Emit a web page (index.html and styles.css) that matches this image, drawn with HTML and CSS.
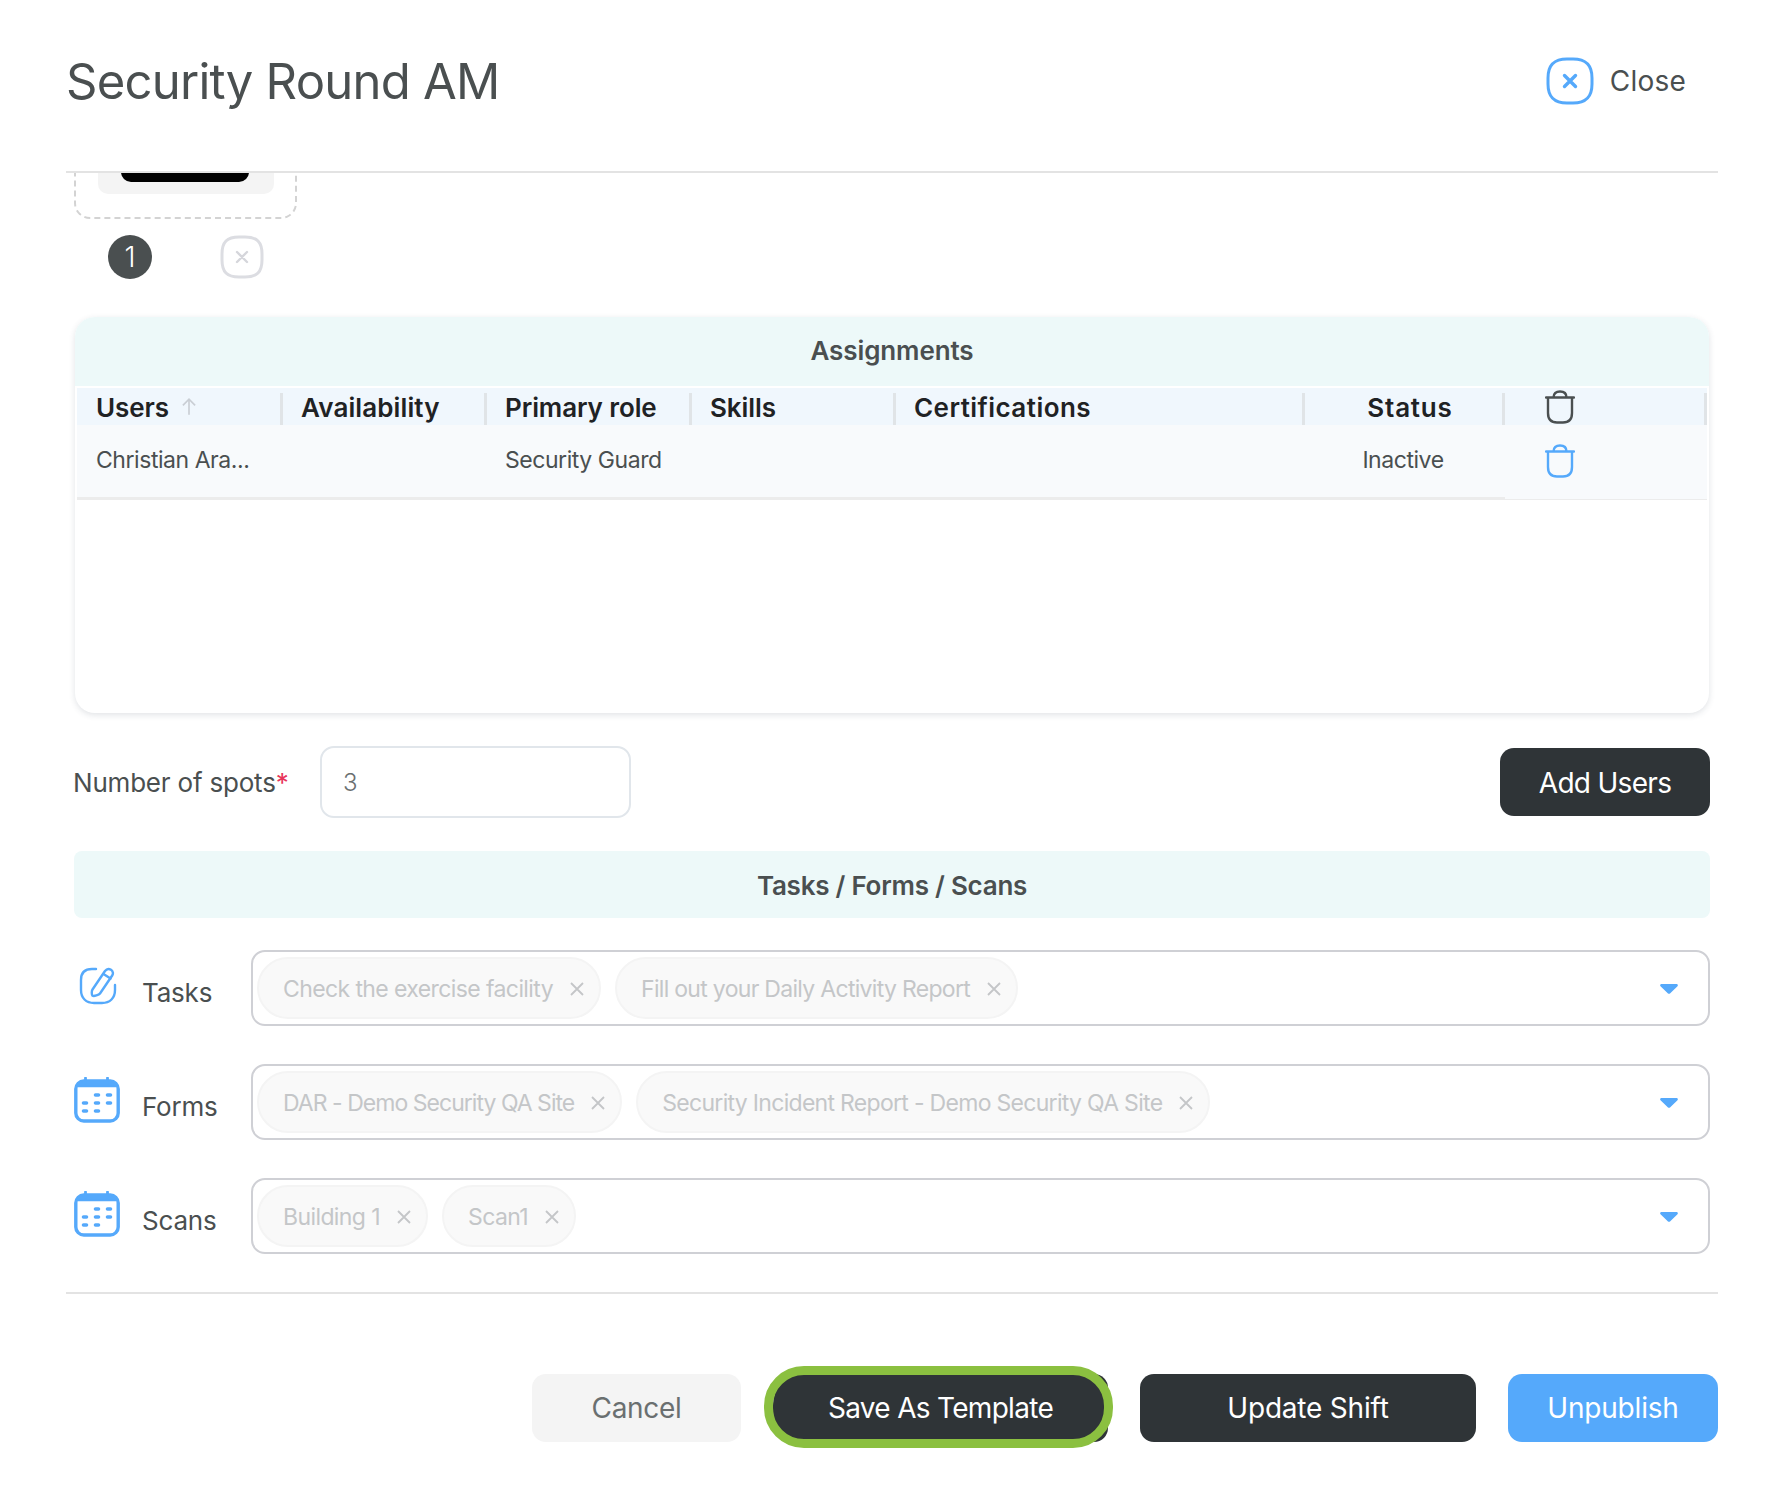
FILE: index.html
```html
<!DOCTYPE html>
<html lang="en">
<head>
<meta charset="utf-8">
<title>Security Round AM</title>
<link rel="stylesheet" href="styles.css">
</head>
<body>
<div class="modal">
  <header class="modal-head">
    <h1 class="title">Security Round AM</h1>
    <button class="close">
      <svg class="close-icon" viewBox="0 0 48 48" fill="none"><path d="M24 2h3C40 2 46 8 46 21v6c0 13-6 19-19 19h-6C8 46 2 40 2 27v-6C2 8 8 2 21 2Z" stroke="#55a9fb" stroke-width="3"/><path d="M18.500 18.500l11 11M29.500 18.500l-11 11" stroke="#55a9fb" stroke-width="3.400" stroke-linecap="round"/></svg>
      <span>Close</span>
    </button>
  </header>
  <main class="modal-body">
    <div class="thumb-block">
      <div class="thumb"><div class="thumb-grey"><div class="thumb-black"></div></div></div>
      <div class="thumb-actions">
        <span class="badge">1</span>
        <svg class="thumb-x" viewBox="0 0 44 44" fill="none"><path d="M22 2h3C37 2 42 7 42 19v6c0 12-5 17-17 17h-6C7 42 2 37 2 25v-6C2 7 7 2 19 2Z" stroke="#dcdde2" stroke-width="3"/><path d="M17 17l10 10M27 17L17 27" stroke="#d5d6db" stroke-width="2.400" stroke-linecap="round"/></svg>
      </div>
    </div>

    <section class="panel">
      <div class="band band-top">Assignments</div>
      <div class="table">
        <div class="tr th">
          <div class="cell c-users"><span>Users</span><svg class="sort" viewBox="0 0 16 18" fill="none"><path d="M8 16V2M2.500 7.500L8 2l5.500 5.500" stroke="#c9ced4" stroke-width="1.500"/></svg></div>
          <div class="cell c-avail">Availability</div>
          <div class="cell c-role">Primary role</div>
          <div class="cell c-skills">Skills</div>
          <div class="cell c-certs">Certifications</div>
          <div class="cell c-status">Status</div>
          <div class="cell c-del">
            <svg class="trash" viewBox="0 0 30 34" fill="none" stroke="#4a4f50" stroke-width="2.400" stroke-linecap="round"><path d="M1 7.500h28M8.500 7.500c0-4 2.500-6 6.500-6s6.500 2 6.500 6M3 7.500V23c0 6 3 9.500 9 9.500h6c6 0 9-3.500 9-9.500V7.500"/></svg>
          </div>
        </div>
        <div class="tr td">
          <div class="cell c-users">Christian Ara...</div>
          <div class="cell c-avail"></div>
          <div class="cell c-role">Security Guard</div>
          <div class="cell c-skills"></div>
          <div class="cell c-certs"></div>
          <div class="cell c-status">Inactive</div>
          <div class="cell c-del">
            <svg class="trash" viewBox="0 0 30 34" fill="none" stroke="#55a9fb" stroke-width="2.400" stroke-linecap="round"><path d="M1 7.500h28M8.500 7.500c0-4 2.500-6 6.500-6s6.500 2 6.500 6M3 7.500V23c0 6 3 9.500 9 9.500h6c6 0 9-3.500 9-9.500V7.500"/></svg>
          </div>
        </div>
      </div>
    </section>

    <div class="spots">
      <label class="spots-label">Number of spots<span class="req">*</span></label>
      <div class="spots-input">3</div>
      <button class="btn btn-dark btn-add">Add Users</button>
    </div>

    <div class="band band-tasks">Tasks / Forms / Scans</div>

    <div class="pick-list">
      <div class="pick">
        <div class="pick-icon">
          <svg class="icon-pencil" viewBox="0 0 40 40" fill="none" stroke="#55a9fb" stroke-width="2.400" stroke-linecap="round" stroke-linejoin="round"><path d="M17 3H13C6 3 2 7 2 14v10c0 8 5 13 13 13h8c8 0 13-5 13-13v-5"/><path d="M13.500 23.500L26 5c1.500-2 4-2.500 6-1.200s2.500 3.700 1.200 5.700L21 27.500c-1 1.500-6 3-7.500 2.200-1-.8-1-4.700 0-6.200Z"/><path d="M24.500 8l7 4.500"/></svg>
        </div>
        <span class="pick-label">Tasks</span>
        <div class="select">
          <span class="chip">Check the exercise facility<svg class="chip-x" viewBox="0 0 14 14"><path d="M1 1l12 12M13 1L1 13"/></svg></span>
          <span class="chip chip-mid">Fill out your Daily Activity Report<svg class="chip-x" viewBox="0 0 14 14"><path d="M1 1l12 12M13 1L1 13"/></svg></span>
          <svg class="caret" viewBox="0 0 18 10"><path d="M1.500 0h15c1.200 0 1.800 1.300 1 2.200L10 9.400c-.6.600-1.400.600-2 0L.500 2.200C-.300 1.300.300 0 1.500 0Z"/></svg>
        </div>
      </div>
      <div class="pick">
        <div class="pick-icon">
          <svg class="icon-cal" viewBox="0 0 46 46" fill="none"><rect x="1.800" y="4" width="42.400" height="40" rx="8" stroke="#55a9fb" stroke-width="3.400"/><path d="M3 9.500c1-3.500 3-4.500 6-4.500h28c3 0 5 1 6 4.500Z" fill="#55a9fb" stroke="#55a9fb" stroke-width="1.500"/><path d="M11.500 1v5M33.500 1v5" stroke="#55a9fb" stroke-width="2.800" stroke-linecap="round"/><path d="M21.500 18h3M33.500 18h3M9.500 26h3M21.500 26h3M33.500 26h3M9.500 34h3M21.500 34h3" stroke="#55a9fb" stroke-width="3.600" stroke-linecap="round"/></svg>
        </div>
        <span class="pick-label">Forms</span>
        <div class="select">
          <span class="chip chip-tight">DAR - Demo Security QA Site<svg class="chip-x" viewBox="0 0 14 14"><path d="M1 1l12 12M13 1L1 13"/></svg></span>
          <span class="chip chip-mid">Security Incident Report - Demo Security QA Site<svg class="chip-x" viewBox="0 0 14 14"><path d="M1 1l12 12M13 1L1 13"/></svg></span>
          <svg class="caret" viewBox="0 0 18 10"><path d="M1.500 0h15c1.200 0 1.800 1.300 1 2.200L10 9.400c-.6.600-1.400.600-2 0L.500 2.200C-.300 1.300.300 0 1.500 0Z"/></svg>
        </div>
      </div>
      <div class="pick">
        <div class="pick-icon">
          <svg class="icon-cal" viewBox="0 0 46 46" fill="none"><rect x="1.800" y="4" width="42.400" height="40" rx="8" stroke="#55a9fb" stroke-width="3.400"/><path d="M3 9.500c1-3.500 3-4.500 6-4.500h28c3 0 5 1 6 4.500Z" fill="#55a9fb" stroke="#55a9fb" stroke-width="1.500"/><path d="M11.500 1v5M33.500 1v5" stroke="#55a9fb" stroke-width="2.800" stroke-linecap="round"/><path d="M21.500 18h3M33.500 18h3M9.500 26h3M21.500 26h3M33.500 26h3M9.500 34h3M21.500 34h3" stroke="#55a9fb" stroke-width="3.600" stroke-linecap="round"/></svg>
        </div>
        <span class="pick-label">Scans</span>
        <div class="select">
          <span class="chip">Building 1<svg class="chip-x" viewBox="0 0 14 14"><path d="M1 1l12 12M13 1L1 13"/></svg></span>
          <span class="chip">Scan1<svg class="chip-x" viewBox="0 0 14 14"><path d="M1 1l12 12M13 1L1 13"/></svg></span>
          <svg class="caret" viewBox="0 0 18 10"><path d="M1.500 0h15c1.200 0 1.800 1.300 1 2.200L10 9.400c-.6.600-1.400.600-2 0L.500 2.200C-.300 1.300.300 0 1.500 0Z"/></svg>
        </div>
      </div>
    </div>
  </main>
  <footer class="modal-foot">
    <button class="btn btn-cancel">Cancel</button>
    <button class="btn btn-dark btn-save">Save As Template</button>
    <button class="btn btn-dark btn-update">Update Shift</button>
    <button class="btn btn-blue btn-unpublish">Unpublish</button>
  </footer>
</div>
</body>
</html>
```
FILE: styles.css
```css
* { box-sizing: border-box; }
html, body { margin: 0; height: 100%; background: #fff; }
body { font-family: Inter, "Liberation Sans", sans-serif; color: #4a4f50; }
button { font: inherit; border: 0; background: none; padding: 0; margin: 0; }

.modal { width: 1776px; height: 1496px; padding: 0 58px 0 66px; display: flex; flex-direction: column; overflow: hidden; }

.modal-head { height: 173px; flex: none; display: flex; align-items: center; justify-content: space-between; border-bottom: 2px solid #e3e3e3; padding: 0 32px 9px 0; }
.title { margin: 0; font-size: 49px; font-weight: 400; letter-spacing: -.75px; color: #4a4f50; }
.close { display: flex; align-items: center; gap: 16px; font-size: 28px; color: #4a4f50; letter-spacing: .2px; }
.close-icon { width: 48px; height: 48px; display: block; }

.modal-body { height: 1121px; flex: none; padding: 0 9px; overflow: hidden; border-bottom: 2px solid #e3e3e3; }

.thumb-block { height: 164px; }
.thumb { width: 223px; height: 66px; margin: -20px 0 0 -1px; border: 2px dashed #d3d3d3; border-radius: 16px; padding: 0 0 0 22px; }
.thumb-grey { width: 176px; height: 39px; background: #f4f4f4; border-radius: 0 0 10px 10px; padding-left: 23px; }
.thumb-black { width: 128px; height: 27px; background: #000; border-radius: 0 0 10px 10px; }
.thumb-actions { display: flex; align-items: center; gap: 68px; padding-left: 33px; margin-top: 16px; }
.badge { width: 44px; height: 44px; border-radius: 50%; background: #4a4f50; color: #fff; display: flex; align-items: center; justify-content: center; font-size: 28px; font-weight: 300; }
.thumb-x { width: 44px; height: 44px; display: block; }

.panel { height: 396px; border-radius: 20px; background: #fff; box-shadow: 0 2px 6px rgba(40, 60, 80, .14); overflow: hidden; }
.band { background: #edf9f9; display: flex; align-items: center; justify-content: center; font-size: 26px; font-weight: 600; color: #4a4f50; letter-spacing: -.1px; }
.band-top { height: 69px; padding-bottom: 2px; }

.table { padding: 2px 2px 0; }
.tr { display: grid; grid-template-columns: 206px 204px 205px 204px 409px 200px 1fr; }
.th { height: 37px; background: #f0f7fd; font-size: 26px; font-weight: 600; color: #1f2224; }
.td { height: 75px; background: #f8fafc; font-size: 23px; color: #4a4f50; letter-spacing: -.45px; }
.cell { display: flex; align-items: center; padding-left: 18px; white-space: nowrap; position: relative; }
.th .cell { letter-spacing: -.1px; padding-top: 1px; }
.th .cell::after { content: ""; position: absolute; right: 0; top: 5px; bottom: 0; width: 3px; background: #e0e4e7; }
.td .cell { border-bottom: 3px solid #ececec; padding-bottom: 2px; }
.td .c-del { border-bottom: 1px solid #ececec; }
.th .c-users, .td .c-users { padding-left: 19px; }
.sort { width: 18px; height: 20px; margin-left: 11px; }
.c-status { justify-content: center; }
.th .c-status { padding-left: 10px; letter-spacing: .8px; }
.td .c-status { padding-left: 0; padding-right: 4px; }
.th .c-certs { letter-spacing: .45px; }
.th .c-avail { letter-spacing: .1px; }
.th .c-del, .td .c-del { padding-left: 40px; }
.trash { width: 30px; height: 34px; display: block; }

.spots { display: flex; align-items: center; margin-top: 33px; height: 72px; }
.spots-label { font-size: 26px; color: #4a4f50; letter-spacing: -.2px; width: 247px; margin-left: -2px; flex: none; }
.req { color: #e8345a; }
.spots-input { width: 311px; height: 72px; border: 2px solid #e1e6eb; border-radius: 14px; display: flex; align-items: center; padding: 1px 0 0 21px; font-size: 24px; font-weight: 300; color: #6a6f70; }
.btn { display: flex; align-items: center; justify-content: center; border-radius: 14px; font-size: 28px; height: 68px; flex: none; white-space: nowrap; }
.btn-dark { background: #2f3437; color: #fff; }
.btn-add { width: 210px; margin: 0 -1px 0 auto; padding-top: 2px; letter-spacing: -.7px; }

.band-tasks { height: 67px; margin: 33px -1px 0; padding-top: 1px; border-radius: 8px; letter-spacing: -.25px; }

.pick-list { margin-top: 32px; display: flex; flex-direction: column; gap: 38px; }
.pick { display: flex; align-items: center; height: 76px; margin-right: -1px; }
.pick-icon { width: 67px; flex: none; display: flex; align-items: center; padding-bottom: 4px; }
.icon-pencil { width: 40px; height: 40px; margin-left: 4px; display: block; }
.icon-cal { width: 46px; height: 46px; margin-left: -1px; display: block; }
.pick-label { width: 109px; flex: none; font-size: 26px; padding-top: 8px; letter-spacing: -.2px; }
.select { flex: 1; height: 76px; border: 2px solid #cfd0d5; border-radius: 14px; display: flex; align-items: center; gap: 14px; padding: 0 4px; position: relative; }
.chip { height: 62px; border-radius: 31px; background: #f9f9f9; border: 2px solid #f4f4f4; display: flex; align-items: center; gap: 17px; padding: 2px 15px 0 24px; font-size: 23px; color: #c4c6c8; letter-spacing: -.6px; white-space: nowrap; }
.chip-tight { letter-spacing: -.97px; }
.chip-mid { letter-spacing: -.7px; }
.chip-x { width: 14px; height: 14px; flex: none; fill: none; stroke: #c4c6c8; stroke-width: 1.800; }
.caret { position: absolute; right: 30px; top: 32px; width: 18px; height: 10px; fill: #55a9fb; }

.modal-foot { flex: 1; display: flex; justify-content: flex-end; gap: 32px; padding-top: 80px; }
.modal-foot .btn { height: 68px; }
.btn-cancel { width: 209px; background: #f4f4f4; color: #6a6f70; letter-spacing: -.3px; }
.btn-save { width: 335px; position: relative; border-radius: 30px 14px 14px 30px; letter-spacing: -.7px; }
.btn-save::after { content: ""; position: absolute; inset: -8px -5px -6px -9px; border: 9px solid #8bc040; border-radius: 40px; }
.btn-update { width: 336px; letter-spacing: -.2px; }
.btn-blue { width: 210px; background: #55a9fb; color: #fff; letter-spacing: -.2px; }
```
